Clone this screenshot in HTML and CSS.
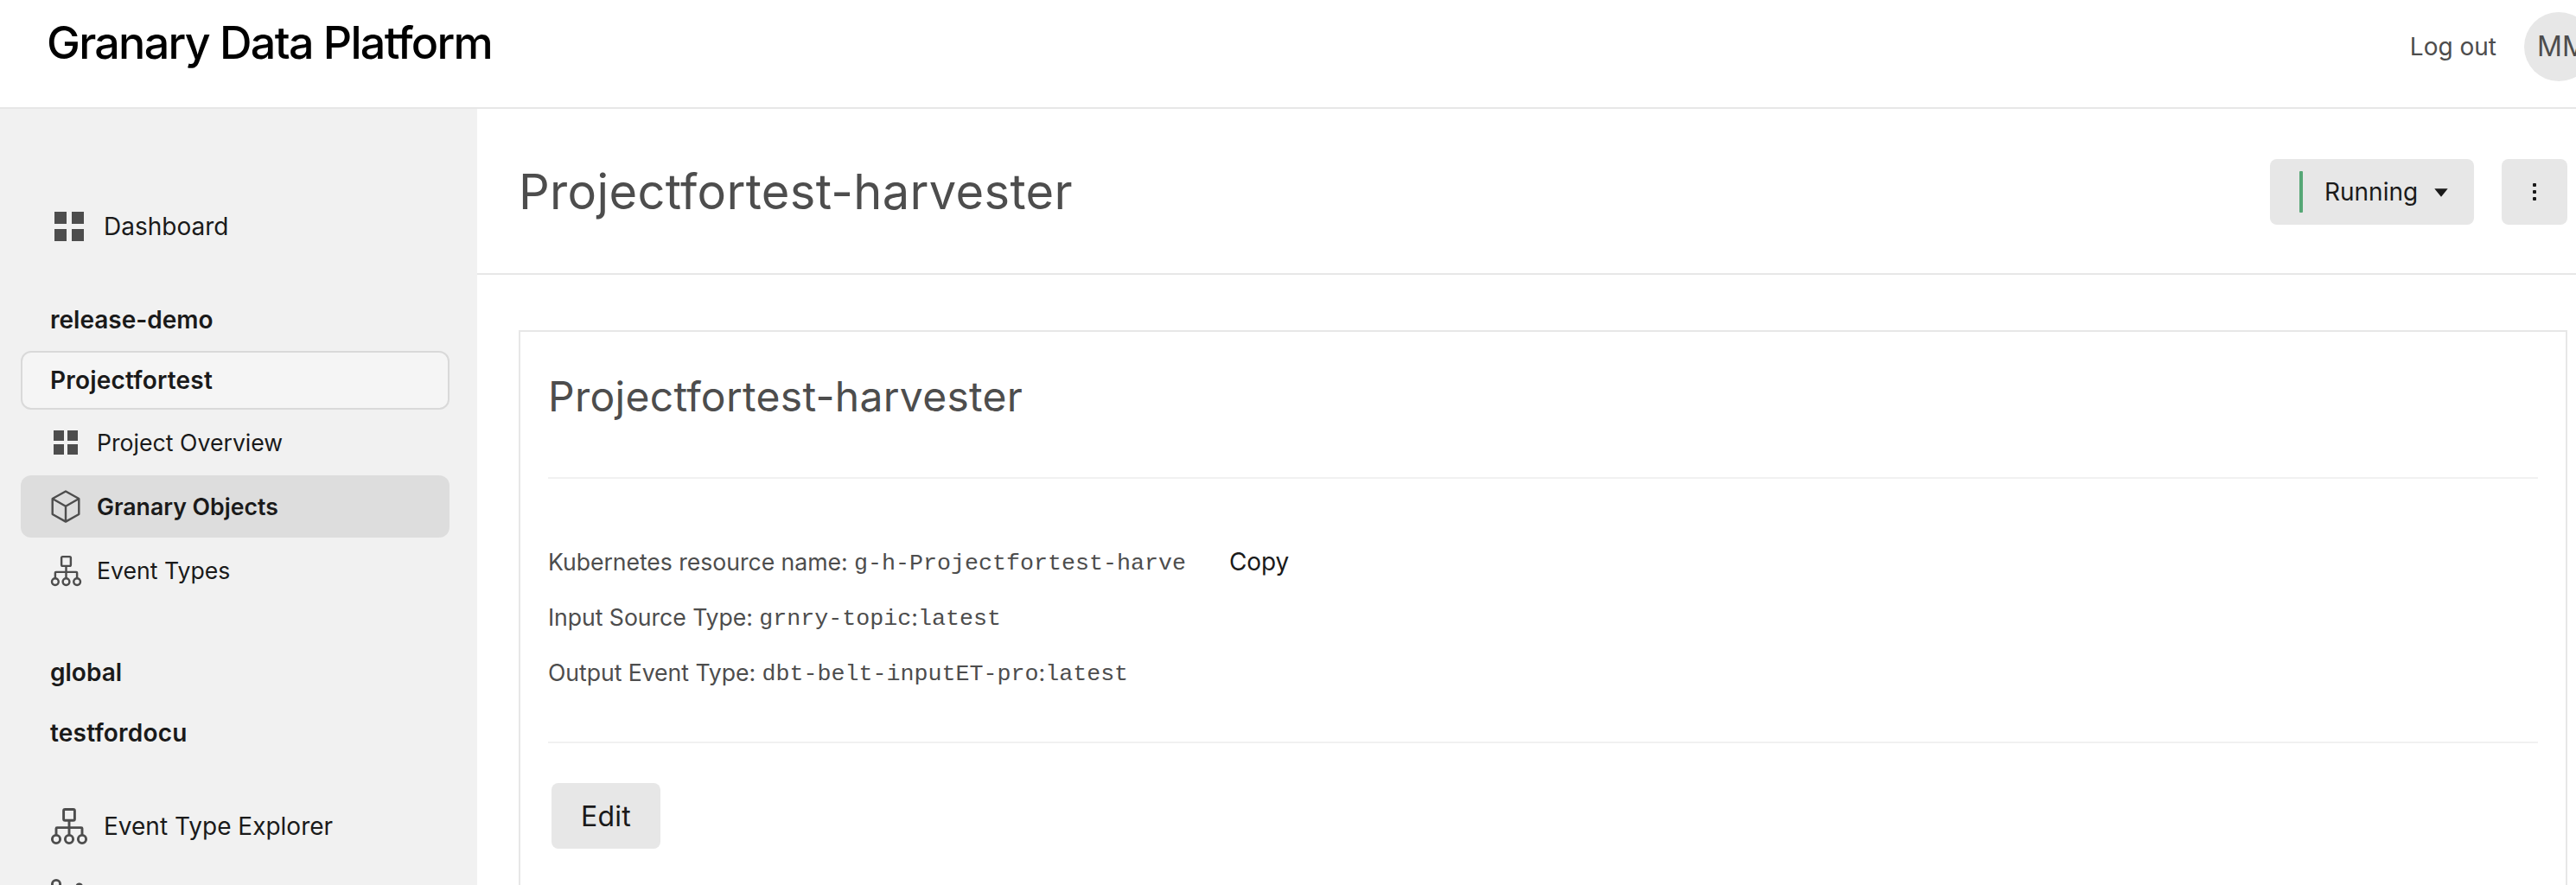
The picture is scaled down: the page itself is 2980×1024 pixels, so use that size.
FILE: index.html
```html
<!DOCTYPE html>
<html lang="en">
<head>
<meta charset="utf-8">
<title>Granary Data Platform</title>
<link rel="stylesheet" href="styles.css">
</head>
<body>
<svg class="sprite" aria-hidden="true">
  <symbol id="grid" viewBox="0 0 34 34"><path d="M0 0h14v14H0zM20 0h14v14H20zM0 20h14v14H0zM20 20h14v14H20z" fill="currentColor"/></symbol>
  <symbol id="tree" viewBox="0 0 44 44">
    <g fill="none" stroke="currentColor" stroke-width="2.9">
      <rect x="15.6" y="2.5" width="12.8" height="12.8" rx="1.6"/>
      <path d="M22 15.3V32M7 32v-7.4q0-1 1-1h28q1 0 1 1V32"/>
      <circle cx="7" cy="37" r="4.6"/><circle cx="22" cy="37" r="4.6"/><circle cx="37" cy="37" r="4.6"/>
    </g>
  </symbol>
</svg>
<header class="topbar">
  <div class="brand">Granary Data Platform</div>
  <div class="account">
    <a class="logout">Log out</a>
    <div class="avatar">MM</div>
  </div>
</header>
<div class="layout">
  <nav class="sidebar">
    <a class="item main-item"><span class="icon"><svg class="grid-lg"><use href="#grid"/></svg></span>Dashboard</a>
    <div class="projects">
      <a class="item project">release-demo</a>
      <a class="item project open"><span class="nudge">Projectfortest</span></a>
      <a class="item sub"><span class="icon"><svg class="grid-sm" viewBox="0 0 28 28"><path d="M0 0h12v12H0zM16 0h12v12H16zM0 16h12v12H0zM16 16h12v12H16z" fill="currentColor"/></svg></span>Project Overview</a>
      <a class="item sub active"><span class="icon"><svg class="cube" viewBox="0 0 36 40"><path d="M18 2.5 33.3 11v18L18 37.6 2.7 29V11zM2.7 11 18 19.7 33.3 11M18 19.7v17.9" fill="none" stroke="currentColor" stroke-width="2.4" stroke-linejoin="round"/></svg></span>Granary Objects</a>
      <a class="item sub"><span class="icon"><svg class="tree-sm"><use href="#tree"/></svg></span>Event Types</a>
      <a class="item project first">global</a>
      <a class="item project"><span class="nudge">testfordocu</span></a>
    </div>
    <a class="item main-item"><span class="icon"><svg class="tree-lg"><use href="#tree"/></svg></span>Event Type Explorer</a>
    <a class="item main-item cut"><span class="icon"><svg class="tree-lg" viewBox="0 0 44 44"><g fill="none" stroke="currentColor" stroke-width="2.9"><circle cx="7" cy="9" r="4.6"/><path d="M7 14v20"/></g><circle cx="33.7" cy="11.4" r="4" fill="currentColor"/></svg></span></a>
  </nav>
  <main class="content">
    <div class="page-head">
      <h1>Projectfortest-harvester</h1>
      <div class="actions">
        <button class="btn status"><i class="bar"></i>Running<svg class="caret" viewBox="0 0 16 10"><path d="M.3.2h15.4L8 9.8z" fill="currentColor"/></svg></button>
        <button class="btn kebab"><i></i><i></i><i></i></button>
      </div>
    </div>
    <section class="card">
      <h2>Projectfortest-harvester</h2>
      <div class="facts">
        <p>Kubernetes resource name: <code>g-h-Projectfortest-harve</code><a class="copy">Copy</a></p>
        <p>Input Source Type: <code>grnry-topic</code>:<code>latest</code></p>
        <p>Output Event Type: <code>dbt-belt-inputET-pro</code>:<code>latest</code></p>
      </div>
      <button class="btn edit">Edit</button>
    </section>
  </main>
</div>
</body>
</html>
```
FILE: styles.css
```css
* { box-sizing: border-box; }
body {
  margin: 0;
  height: 1024px;
  overflow: hidden;
  display: flex;
  flex-direction: column;
  background: #fff;
  color: #4d4d4d;
  font: 400 28px "Inter", sans-serif;
}
.sprite { display: none; }
svg { display: block; overflow: visible; }

.topbar {
  flex: none;
  height: 126px;
  border-bottom: 2px solid #e7e7e7;
  display: flex;
  justify-content: space-between;
  align-items: flex-start;
  padding: 14px 0 0 54px;
  overflow: hidden;
}
.brand {
  font-size: 52px;
  font-weight: 500;
  line-height: 71px;
  letter-spacing: -1.72px;
  color: #000;
}
.account {
  display: flex;
  align-items: center;
  gap: 32px;
  margin-right: -20px;
}
.avatar {
  width: 80px;
  height: 80px;
  border-radius: 50%;
  background: #e7e7e7;
  font-size: 32px;
  line-height: 80px;
  padding-left: 15px;
}

.layout { flex: 1; min-height: 0; display: flex; }
.sidebar {
  flex: none;
  width: 552px;
  padding: 112px 32px 0 24px;
  background: #f1f1f1;
  overflow: hidden;
  color: #1a1a1a;
}
.item {
  display: flex;
  align-items: center;
  padding-left: 34px;
  border-radius: 12px;
  white-space: nowrap;
}
.main-item { height: 48px; }
.main-item .icon { width: 62px; }
.cut { margin-top: 32px; }
.icon { display: block; flex: none; color: #4d4d4d; }
.projects {
  display: flex;
  flex-direction: column;
  gap: 2px;
  padding: 50px 0;
}
.project { height: 68px; font-weight: 600; }
.project.first { margin-top: 46px; }
.open {
  background: #f5f5f5;
  border: 2px solid #d9d9d9;
  padding-left: 32px;
}
.nudge { letter-spacing: 0.2px; }
.sub { height: 72px; font-size: 26.667px; }
.sub .icon { width: 54px; }
.active { background: #ddd; font-weight: 600; }
.grid-lg { width: 34px; height: 34px; margin-left: 5px; }
.grid-sm { width: 28px; height: 28px; margin-left: 4px; }
.cube { width: 36px; height: 40px; }
.tree-sm { width: 37px; height: 37px; }
.tree-lg { width: 44px; height: 44px; }

.content { flex: 1; min-width: 0; display: flex; flex-direction: column; }
.page-head {
  flex: none;
  height: 192px;
  border-bottom: 2px solid #e7e7e7;
  display: flex;
  justify-content: space-between;
  align-items: center;
  padding: 2px 10px 0 48px;
}
h1, h2, p { margin: 0; font-weight: 400; }
h1 { font-size: 56px; letter-spacing: 0.34px; }
.actions { display: flex; gap: 32px; }
.btn {
  height: 76px;
  border: 0;
  border-radius: 8px;
  background: #e7e7e7;
  color: #1a1a1a;
  font: 400 28px "Inter", sans-serif;
  padding: 0;
}
.status { width: 236px; display: flex; align-items: center; padding-left: 34px; }
.bar {
  width: 4px;
  height: 48px;
  border-radius: 1px;
  background: #56a776;
  margin-right: 25px;
}
.caret { width: 16px; height: 10px; margin: 2px 0 0 19px; }
.kebab {
  width: 76px;
  display: flex;
  flex-direction: column;
  align-items: center;
  justify-content: center;
  gap: 4px;
}
.kebab i { width: 4px; height: 4px; border-radius: 1px; background: #1a1a1a; }

.card {
  flex: 1;
  margin: 64px 10px 0 48px;
  padding: 0 32px;
  border: 2px solid #e7e7e7;
  border-bottom: 0;
}
h2 {
  height: 170px;
  line-height: 149px;
  border-bottom: 2px solid #f1f1f1;
  font-size: 48px;
  letter-spacing: 0.28px;
}
.facts {
  height: 306px;
  padding-top: 64px;
  border-bottom: 2px solid #f1f1f1;
  font-size: 26.667px;
  line-height: 64px;
}
.facts p { height: 64px; white-space: nowrap; letter-spacing: -0.06px; }
code {
  font: 26.667px/1 "Liberation Mono", monospace;
  letter-spacing: 0;
  vertical-align: 1px;
}
.copy { margin-left: 50px; font-size: 28px; color: #1a1a1a; }
.edit { width: 126px; margin: 46px 0 0 4px; font-size: 32px; letter-spacing: 0.3px; }
```
